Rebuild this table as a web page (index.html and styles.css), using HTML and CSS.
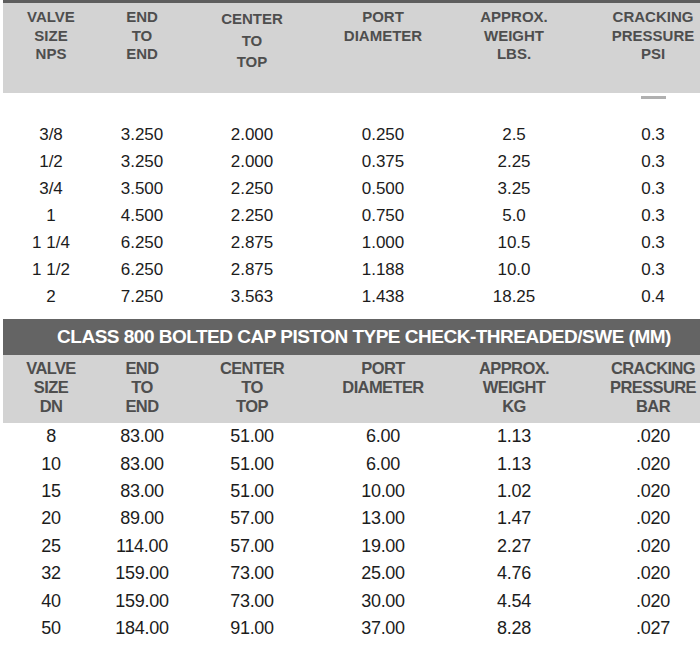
FILE: index.html
```html
<!DOCTYPE html>
<html>
<head>
<meta charset="utf-8">
<link rel="stylesheet" href="styles.css">
</head>
<body>
<div class="sheet">
  <div class="topbar"></div>
  <div class="head grid">
    <div class="h">VALVE<br>SIZE<br>NPS</div>
    <div class="h">END<br>TO<br>END</div>
    <div class="h tall">CENTER<br>TO<br>TOP</div>
    <div class="h">PORT<br>DIAMETER</div>
    <div class="h">APPROX.<br>WEIGHT<br>LBS.</div>
    <div class="h last">CRACKING<br>PRESSURE<br>PSI</div>
  </div>
  <div class="cut grid">
    <div></div><div></div><div></div><div></div><div></div>
    <div class="last"><span class="dash"></span></div>
  </div>
  <div class="rows">
    <div class="row grid"><div>3/8</div><div>3.250</div><div>2.000</div><div>0.250</div><div>2.5</div><div class="last">0.3</div></div>
    <div class="row grid"><div>1/2</div><div>3.250</div><div>2.000</div><div>0.375</div><div>2.25</div><div class="last">0.3</div></div>
    <div class="row grid"><div>3/4</div><div>3.500</div><div>2.250</div><div>0.500</div><div>3.25</div><div class="last">0.3</div></div>
    <div class="row grid"><div>1</div><div>4.500</div><div>2.250</div><div>0.750</div><div>5.0</div><div class="last">0.3</div></div>
    <div class="row grid"><div>1 1/4</div><div>6.250</div><div>2.875</div><div>1.000</div><div>10.5</div><div class="last">0.3</div></div>
    <div class="row grid"><div>1 1/2</div><div>6.250</div><div>2.875</div><div>1.188</div><div>10.0</div><div class="last">0.3</div></div>
    <div class="row grid"><div>2</div><div>7.250</div><div>3.563</div><div>1.438</div><div>18.25</div><div class="last">0.4</div></div>
  </div>

  <div class="metric">
    <div class="band">CLASS 800 BOLTED CAP PISTON TYPE CHECK-THREADED/SWE (MM)</div>
    <div class="head2 grid">
      <div class="h">VALVE<br>SIZE<br>DN</div>
      <div class="h">END<br>TO<br>END</div>
      <div class="h">CENTER<br>TO<br>TOP</div>
      <div class="h">PORT<br>DIAMETER</div>
      <div class="h">APPROX.<br>WEIGHT<br>KG</div>
      <div class="h last">CRACKING<br>PRESSURE<br>BAR</div>
    </div>
    <div class="rows2">
      <div class="row2 grid"><div>8</div><div>83.00</div><div>51.00</div><div>6.00</div><div>1.13</div><div class="last">.020</div></div>
      <div class="row2 grid"><div>10</div><div>83.00</div><div>51.00</div><div>6.00</div><div>1.13</div><div class="last">.020</div></div>
      <div class="row2 grid"><div>15</div><div>83.00</div><div>51.00</div><div>10.00</div><div>1.02</div><div class="last">.020</div></div>
      <div class="row2 grid"><div>20</div><div>89.00</div><div>57.00</div><div>13.00</div><div>1.47</div><div class="last">.020</div></div>
      <div class="row2 grid"><div>25</div><div>114.00</div><div>57.00</div><div>19.00</div><div>2.27</div><div class="last">.020</div></div>
      <div class="row2 grid"><div>32</div><div>159.00</div><div>73.00</div><div>25.00</div><div>4.76</div><div class="last">.020</div></div>
      <div class="row2 grid"><div>40</div><div>159.00</div><div>73.00</div><div>30.00</div><div>4.54</div><div class="last">.020</div></div>
      <div class="row2 grid"><div>50</div><div>184.00</div><div>91.00</div><div>37.00</div><div>8.28</div><div class="last">.027</div></div>
    </div>
  </div>
</div>
</body>
</html>
```
FILE: styles.css
```css
html, body {
  margin: 0;
  padding: 0;
  background: #ffffff;
}
body {
  width: 700px;
  height: 646px;
  overflow: hidden;
  font-family: "Liberation Sans", Arial, sans-serif;
}
.sheet {
  padding-left: 3px;
}
.grid {
  display: grid;
  grid-template-columns: 96px 86px 134px 128px 134px 119px;
  text-align: center;
}
.grid .last {
  padding-left: 25px;
}
.topbar {
  height: 3px;
  background: #5e5e5e;
}
.head {
  height: 90px;
  background: #d3d3d3;
  box-sizing: border-box;
  padding-top: 5px;
  color: #4e4e4e;
  font-weight: bold;
  font-size: 15px;
  line-height: 18.5px;
}
.head .tall {
  line-height: 21.5px;
  padding-top: 0;
}
.cut {
  height: 28.5px;
}
.dash {
  display: block;
  width: 25px;
  height: 3px;
  margin: 3px auto 0;
  background: #b0b0b0;
}
.row {
  height: 27px;
  align-items: center;
  font-size: 17px;
  color: #1c1c1c;
}
.metric {
  margin-top: 8.5px;
}
.band {
  height: 36px;
  background: #646464;
  color: #ffffff;
  font-weight: bold;
  font-size: 19px;
  letter-spacing: -0.5px;
  line-height: 36px;
  text-align: center;
  padding-left: 25px;
}
.head2 {
  height: 68px;
  background: #d3d3d3;
  box-sizing: border-box;
  padding-top: 4px;
  color: #4e4e4e;
  font-weight: bold;
  font-size: 16.5px;
  letter-spacing: -0.6px;
  line-height: 19px;
}
.row2 {
  height: 27.4px;
  align-items: center;
  font-size: 18px;
  letter-spacing: -0.3px;
  color: #1c1c1c;
}
```
